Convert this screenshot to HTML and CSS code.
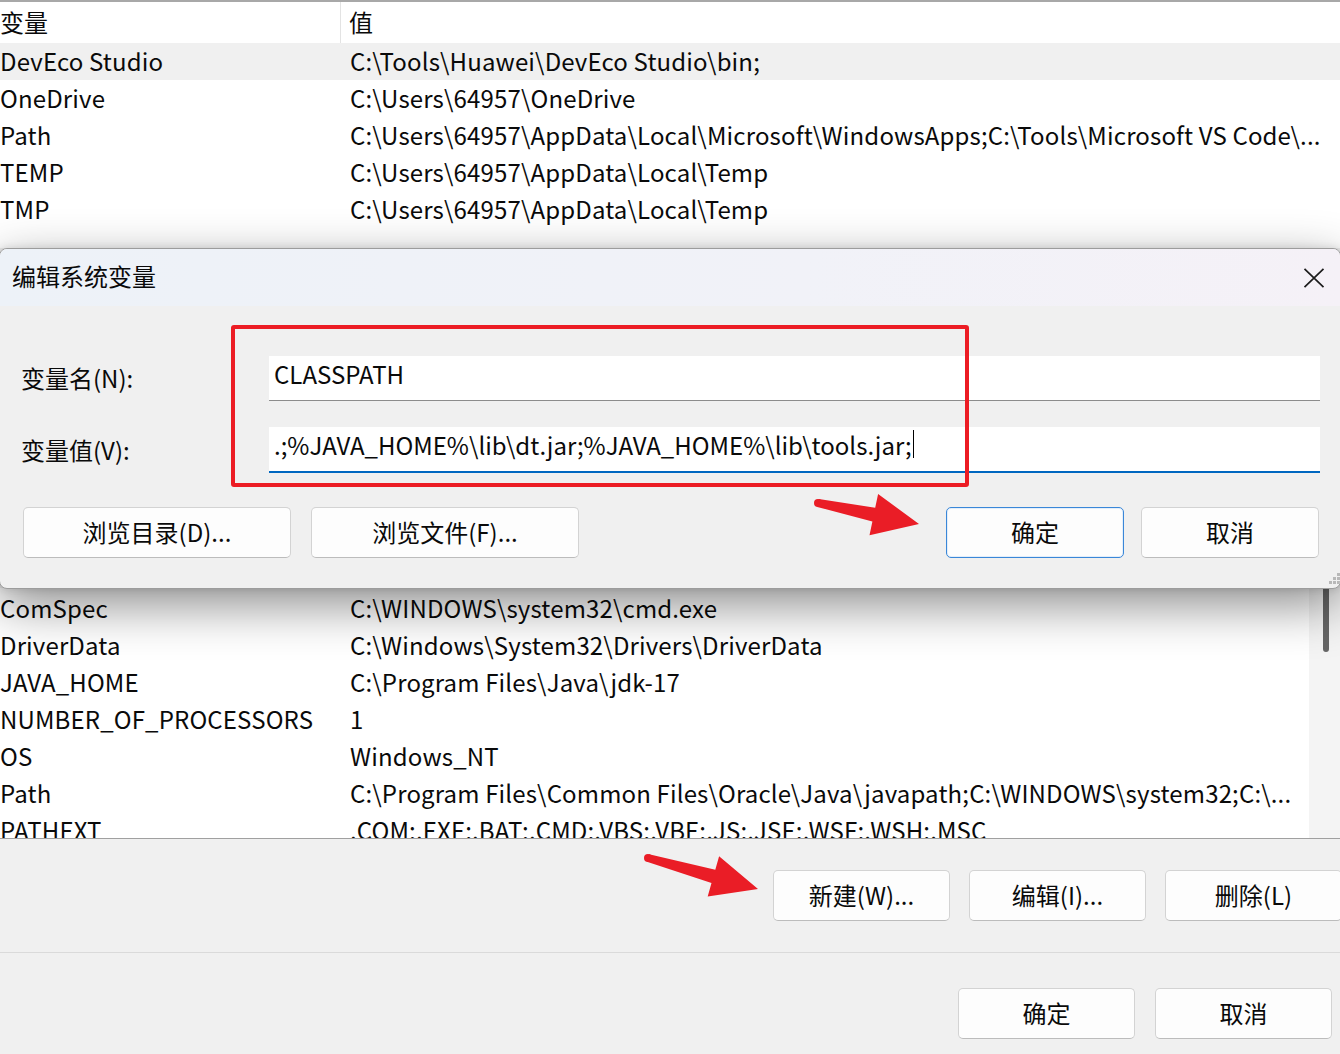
FILE: index.html
```html
<!DOCTYPE html>
<html lang="zh-CN">
<head>
<meta charset="utf-8">
<title>编辑系统变量</title>
<link rel="stylesheet" href="styles.css">
</head>
<body>
<div class="window">
  <div class="list-top">
    <div class="list-head">
      <div class="head-name">变量</div>
      <div class="head-val">值</div>
    </div>
    <div class="row sel"><div class="cell-name">DevEco Studio</div><div class="cell-val">C:\Tools\Huawei\DevEco Studio\bin;</div></div>
    <div class="row"><div class="cell-name">OneDrive</div><div class="cell-val">C:\Users\64957\OneDrive</div></div>
    <div class="row"><div class="cell-name">Path</div><div class="cell-val">C:\Users\64957\AppData\Local\Microsoft\WindowsApps;C:\Tools\Microsoft VS Code\...</div></div>
    <div class="row"><div class="cell-name">TEMP</div><div class="cell-val">C:\Users\64957\AppData\Local\Temp</div></div>
    <div class="row"><div class="cell-name">TMP</div><div class="cell-val">C:\Users\64957\AppData\Local\Temp</div></div>
  </div>
  <div class="covered"></div>
  <div class="list-bottom">
    <div class="rows">
      <div class="row"><div class="cell-name">ComSpec</div><div class="cell-val">C:\WINDOWS\system32\cmd.exe</div></div>
      <div class="row"><div class="cell-name">DriverData</div><div class="cell-val">C:\Windows\System32\Drivers\DriverData</div></div>
      <div class="row"><div class="cell-name">JAVA_HOME</div><div class="cell-val">C:\Program Files\Java\jdk-17</div></div>
      <div class="row"><div class="cell-name">NUMBER_OF_PROCESSORS</div><div class="cell-val">1</div></div>
      <div class="row"><div class="cell-name">OS</div><div class="cell-val">Windows_NT</div></div>
      <div class="row"><div class="cell-name">Path</div><div class="cell-val">C:\Program Files\Common Files\Oracle\Java\javapath;C:\WINDOWS\system32;C:\...</div></div>
      <div class="row"><div class="cell-name">PATHEXT</div><div class="cell-val">.COM;.EXE;.BAT;.CMD;.VBS;.VBE;.JS;.JSE;.WSF;.WSH;.MSC</div></div>
    </div>
    <div class="scroll-track"><div class="scroll-thumb"></div></div>
  </div>
  <div class="btnrow1">
    <div class="btn">新建(W)...</div>
    <div class="btn">编辑(I)...</div>
    <div class="btn">删除(L)</div>
  </div>
  <div class="sep"></div>
  <div class="btnrow2">
    <div class="btn">确定</div>
    <div class="btn">取消</div>
  </div>
</div>

<div class="dialog">
  <div class="dlg-title">
    <span>编辑系统变量</span>
    <svg class="close" width="22" height="20" viewBox="0 0 22 20"><path d="M1.5 0.8 L20.5 19.2 M20.5 0.8 L1.5 19.2" stroke="#1c1c1c" stroke-width="1.7" fill="none"/></svg>
  </div>
  <div class="dlg-body">
    <div class="field f1">
      <div class="label">变量名(N):</div>
      <div class="input in1">CLASSPATH</div>
    </div>
    <div class="field f2">
      <div class="label">变量值(V):</div>
      <div class="input in2">.;%JAVA_HOME%\lib\dt.jar;%JAVA_HOME%\lib\tools.jar;<span class="caret"></span></div>
    </div>
    <div class="dlg-btns">
      <div class="btn wide">浏览目录(D)...</div>
      <div class="btn wide">浏览文件(F)...</div>
      <div class="right-group">
        <div class="btn mid primary">确定</div>
        <div class="btn mid">取消</div>
      </div>
    </div>
  </div>
  <svg class="grip" width="12" height="14" viewBox="0 0 12 14">
    <rect x="9" y="1" width="3" height="3" fill="#b8b8b8"/>
    <rect x="5" y="5" width="3" height="3" fill="#b8b8b8"/>
    <rect x="9" y="5" width="3" height="3" fill="#b8b8b8"/>
    <rect x="1" y="9" width="3" height="3" fill="#b8b8b8"/>
    <rect x="5" y="9" width="3" height="3" fill="#b8b8b8"/>
    <rect x="9" y="9" width="3" height="3" fill="#b8b8b8"/>
  </svg>
</div>

<div class="redbox"></div>

<svg class="arrows" width="1340" height="1054" viewBox="0 0 1340 1054">
  <circle cx="818" cy="503" r="4" fill="#ea1d26"/>
  <polygon fill="#ea1d26" points="818.8,499.1 875.2,507.8 878.1,494.0 919,524 869.5,535.2 872.4,521.5 817.2,506.9"/>
  <circle cx="648" cy="858" r="4" fill="#ea1d26"/>
  <polygon fill="#ea1d26" points="649.1,854.2 715.3,869.7 719.1,856.2 758,889 707.7,896.6 711.5,883.1 646.9,861.8"/>
</svg>
</body>
</html>
```

FILE: styles.css
```css
* { box-sizing: border-box; }

body {
  margin: 0;
  width: 1340px;
  height: 1054px;
  overflow: hidden;
  position: relative;
  background: #f0f0f0;
  font-family: "Noto Sans CJK SC", "Noto Sans", sans-serif;
  font-size: 24px;
  color: #0a0a0a;
}

.window {
  display: flex;
  flex-direction: column;
  width: 1340px;
}

.list-top {
  background: #fff;
  border-top: 2px solid #a8a8a8;
  height: 248px;
  overflow: hidden;
}

.list-head {
  display: flex;
  height: 41px;
}

.head-name {
  width: 341px;
  border-right: 1px solid #e3e3e3;
  display: flex;
  align-items: center;
  padding-bottom: 2px;
}

.head-val {
  padding-left: 8px;
  padding-bottom: 2px;
  display: flex;
  align-items: center;
}

.row {
  display: flex;
  height: 37px;
  align-items: center;
  white-space: nowrap;
  line-height: 35px;
  padding-bottom: 2px;
  letter-spacing: 0.15px;
}

.row.sel { background: #f0f0f0; }

.cell-name {
  width: 350px;
  flex: none;
  overflow: hidden;
}

.cell-val {
  flex: 1;
  overflow: hidden;
}

.covered { height: 340px; }

.list-bottom {
  height: 251px;
  background: #fff;
  border-bottom: 1px solid #a0a0a0;
  display: flex;
  overflow: hidden;
}

.list-bottom .rows {
  width: 1309px;
  padding-top: 2px;
  overflow: hidden;
}

.scroll-track {
  width: 31px;
  background: #f4f4f4;
  padding-left: 14px;
}

.scroll-thumb {
  width: 6px;
  height: 64px;
  background: #666;
  border-radius: 0 0 3px 3px;
}

.btn {
  width: 177px;
  height: 51px;
  flex: none;
  display: flex;
  align-items: center;
  justify-content: center;
  padding-bottom: 2px;
  background: #fdfdfd;
  border: 1px solid #d3d3d3;
  border-bottom-color: #bcbcbc;
  border-radius: 5px;
  white-space: nowrap;
}

.btnrow1 {
  display: flex;
  gap: 19px;
  padding-left: 773px;
  margin-top: 31px;
}

.sep {
  height: 1px;
  background: #dadada;
  margin-top: 31px;
}

.btnrow2 {
  display: flex;
  gap: 20px;
  padding-left: 958px;
  margin-top: 35px;
}

/* dialog */
.dialog {
  position: absolute;
  left: -1px;
  top: 248px;
  width: 1342px;
  height: 341px;
  border: 1px solid #9c9c9c;
  border-radius: 8px;
  background: #f0f0f0;
  overflow: hidden;
  box-shadow: 0 16px 50px rgba(0, 0, 0, 0.45), 0 0 8px rgba(0, 0, 0, 0.12);
}

.dlg-title {
  height: 57px;
  display: flex;
  align-items: center;
  justify-content: space-between;
  padding: 0 15px 4px 12px;
  background: linear-gradient(90deg, #edf2f8 0%, #f1f2f8 60%, #f5f1f7 100%);
}

.close { margin-top: 4px; }

.dlg-body {
  display: flex;
  flex-direction: column;
}

.field {
  display: flex;
  align-items: center;
}

.f1 { margin-top: 50px; }
.f2 { margin-top: 26px; }

.label {
  width: 269px;
  padding-left: 21px;
  padding-bottom: 2px;
  flex: none;
}

.input {
  width: 1051px;
  background: #fff;
  padding-left: 5px;
  padding-bottom: 10px;
  display: flex;
  align-items: center;
  white-space: nowrap;
}

.in1 {
  height: 45px;
  border-bottom: 1px solid #8c8c8c;
}

.in2 {
  height: 46px;
  border-bottom: 2px solid #0067c0;
}

.caret {
  display: inline-block;
  width: 0;
  height: 28px;
  border-left: 1.5px solid #000;
  margin-left: 1px;
}

.dlg-btns {
  display: flex;
  margin-top: 34px;
  padding-left: 23px;
  padding-right: 21px;
  gap: 20px;
}

.btn.wide { width: 268px; }

.right-group {
  margin-left: auto;
  display: flex;
  gap: 17px;
}

.btn.mid { width: 178px; }

.btn.primary {
  border: 1px solid #3a87d8;
  box-shadow: inset 0 0 0 1px #e3eefa;
}

.grip {
  position: absolute;
  right: 0;
  bottom: 2px;
}

.redbox {
  position: absolute;
  left: 231px;
  top: 325px;
  width: 738px;
  height: 162px;
  border: 4px solid #ec1c24;
  border-radius: 3px;
}

.arrows {
  position: absolute;
  left: 0;
  top: 0;
  pointer-events: none;
}
```
